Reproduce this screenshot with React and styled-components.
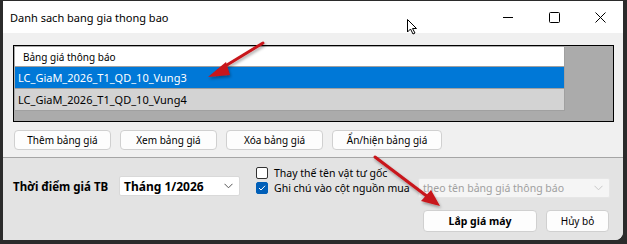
import React from "react";
import styled, { createGlobalStyle } from "styled-components";

const Global = createGlobalStyle`
  html, body { margin: 0; padding: 0; background: #2b2b2b; }
  body { width: 627px; height: 244px; overflow: hidden; font-family: "Noto Sans", "Open Sans", sans-serif; }
  #root { width: 627px; height: 244px; position: relative; }
`;

const Screen = styled.div`
  width: 627px;
  height: 244px;
  padding: 1px 4px 4px 3px;
  box-sizing: border-box;
  position: relative;
`;

const Window = styled.div`
  width: 620px;
  height: 239px;
  background: #f0f0f0;
  border-bottom-right-radius: 8px;
  display: flex;
  flex-direction: column;
  overflow: hidden;
`;

const TitleBar = styled.div`
  height: 32px;
  background: #ffffff;
  display: flex;
  align-items: center;
  padding-left: 7px;
  flex-shrink: 0;
`;

const Title = styled.div`
  font-size: 11px;
  color: #000;
  flex: 1;
`;

const Caption = styled.div`
  width: 46px;
  height: 32px;
  display: flex;
  align-items: center;
  justify-content: center;
`;

const Top = styled.div`
  padding: 12px 9px 0 10px;
  height: 124px;
  box-sizing: border-box;
  display: flex;
  flex-direction: column;
`;

const ListBox = styled.div`
  height: 77px;
  border: 1px solid #000;
  background: #ababab;
  box-sizing: border-box;
  padding: 1px 0 0 1px;
`;

const Row = styled.div`
  width: 550px;
  height: ${p => p.$h || 21}px;
  box-sizing: border-box;
  background: ${p => p.$bg};
  color: ${p => p.$color || "#000"};
  border-right: 1px solid #a0a0a0;
  border-bottom: 1px solid #a0a0a0;
  font-size: ${p => p.$fs || 11}px;
  display: flex;
  align-items: center;
  padding-left: ${p => p.$pl || 3}px;
  white-space: nowrap;
`;

const ButtonRow = styled.div`
  display: flex;
  gap: 9px;
  margin-top: 8px;
  padding-left: 1px;
`;

const Btn = styled.div`
  width: ${p => p.$w}px;
  height: ${p => p.$h || 20}px;
  box-sizing: border-box;
  background: #fdfdfd;
  border: 1px solid #d0d0d0;
  border-radius: 4px;
  font-size: ${p => p.$fs || 10}px;
  font-weight: ${p => (p.$bold ? 700 : 400)};
  color: #000;
  display: flex;
  align-items: center;
  justify-content: center;
  white-space: nowrap;
`;

const Bottom = styled.div`
  flex: 1;
  background: #e3e3e3;
  border-top: 1px solid #a5a5a5;
  padding: 12px 13px 0 10px;
  display: flex;
  flex-direction: column;
`;

const BottomLine = styled.div`
  display: flex;
  align-items: center;
  height: 32px;
`;

const Label = styled.div`
  font-size: 11.5px;
  font-weight: 700;
  width: 106px;
  white-space: nowrap;
`;

const Combo = styled.div`
  width: ${p => p.$w}px;
  height: ${p => p.$h || 20}px;
  box-sizing: border-box;
  background: ${p => (p.$disabled ? "#f5f5f5" : "#fff")};
  border: 1px solid ${p => (p.$disabled ? "#e6e6e6" : "#d9d9d9")};
  border-radius: 2px;
  display: flex;
  align-items: center;
  padding: 0 6px 0 4px;
  font-size: ${p => p.$fs}px;
  font-weight: ${p => (p.$bold ? 700 : 400)};
  color: ${p => (p.$disabled ? "#a0a0a0" : "#000")};
  white-space: nowrap;
  justify-content: space-between;
  margin-left: ${p => (p.$push ? "auto" : "0")};
  margin-top: ${p => p.$mt || 0}px;
`;

const Checks = styled.div`
  display: flex;
  flex-direction: column;
  margin-left: 16px;
  gap: 2px;
  align-self: flex-start;
  margin-top: -4px;
`;

const CheckLine = styled.div`
  display: flex;
  align-items: center;
  font-size: 10.5px;
  height: 13px;
  white-space: nowrap;
`;

const Box = styled.div`
  width: 12px;
  height: 12px;
  border-radius: 2px;
  box-sizing: border-box;
  border: 1px solid ${p => (p.$checked ? "#005fb8" : "#333")};
  background: ${p => (p.$checked ? "#005fb8" : "#fff")};
  margin-right: 6px;
  display: flex;
  align-items: center;
  justify-content: center;
`;

const Actions = styled.div`
  display: flex;
  justify-content: flex-end;
  gap: 9px;
  margin-top: 8px;
  margin-right: 1px;
`;

const Overlay = styled.svg`
  position: absolute;
  left: 0;
  top: 0;
  pointer-events: none;
`;

const Chevron = ({ color = "#555" }) => (
  <svg width="9" height="6" viewBox="0 0 9 6">
    <path d="M0.5 0.8 L4.5 4.8 L8.5 0.8" fill="none" stroke={color} strokeWidth="1" />
  </svg>
);

export default function App() {
  return (
    <Screen>
      <Global />
      <Window>
        <TitleBar>
          <Title>Danh sach bang gia thong bao</Title>
          <Caption>
            <svg width="10" height="10" viewBox="0 0 10 10"><path d="M0 5.5 H10" stroke="#000" strokeWidth="1" /></svg>
          </Caption>
          <Caption>
            <svg width="11" height="11" viewBox="0 0 11 11"><rect x="0.5" y="0.5" width="10" height="10" rx="1" fill="none" stroke="#000" strokeWidth="1" /></svg>
          </Caption>
          <Caption>
            <svg width="11" height="11" viewBox="0 0 11 11"><path d="M0.5 0.5 L10.5 10.5 M10.5 0.5 L0.5 10.5" stroke="#000" strokeWidth="1" /></svg>
          </Caption>
        </TitleBar>
        <Top>
          <ListBox>
            <Row $bg="#ffffff" $h={20} $pl={8} $fs={10}>Bảng giá thông báo</Row>
            <Row $bg="#0078d7" $color="#ffffff" $h={22}>LC_GiaM_2026_T1_QD_10_Vung3</Row>
            <Row $bg="#d3d3d3" $h={22}>LC_GiaM_2026_T1_QD_10_Vung4</Row>
          </ListBox>
          <ButtonRow>
            <Btn $w={97}>Thêm bảng giá</Btn>
            <Btn $w={97}>Xem bảng giá</Btn>
            <Btn $w={97}>Xóa bảng giá</Btn>
            <Btn $w={110}>Ẩn/hiện bảng giá</Btn>
          </ButtonRow>
        </Top>
        <Bottom>
          <BottomLine>
            <Label>Thời điểm giá TB</Label>
            <Combo $w={121} $bold $fs={12}>
              <span>Tháng 1/2026</span>
              <Chevron />
            </Combo>
            <Checks>
              <CheckLine><Box />Thay thế tên vật tư gốc</CheckLine>
              <CheckLine>
                <Box $checked>
                  <svg width="8" height="6" viewBox="0 0 8 6"><path d="M1 3 L3 5 L7 0.8" fill="none" stroke="#fff" strokeWidth="1" /></svg>
                </Box>
                Ghi chú vào cột nguồn mua
              </CheckLine>
            </Checks>
            <Combo $w={192} $disabled $push $mt={4} $fs={10.5}>
              <span>theo tên bảng giá thông báo</span>
              <Chevron color="#c8c8c8" />
            </Combo>
          </BottomLine>
          <Actions>
            <Btn $w={114} $h={22} $bold $fs={10.5}>Lắp giá máy</Btn>
            <Btn $w={63} $h={22}>Hủy bỏ</Btn>
          </Actions>
        </Bottom>
      </Window>
      <Overlay width="627" height="244" viewBox="0 0 627 244">
        <defs>
          <filter id="sh" x="-20%" y="-20%" width="140%" height="140%">
            <feDropShadow dx="1" dy="2" stdDeviation="1.5" floodColor="#000" floodOpacity="0.35" />
          </filter>
        </defs>
        <g filter="url(#sh)">
          <path d="M263 43 L222 68" stroke="#c8141a" strokeWidth="3" strokeLinecap="round" />
          <path d="M208 77 L226 62 L230 75 Z" fill="#c8141a" />
        </g>
        <g filter="url(#sh)">
          <path d="M375 157 L428 197" stroke="#c8141a" strokeWidth="3" strokeLinecap="round" />
          <path d="M440 206 L421 201 L431 190 Z" fill="#c8141a" />
        </g>
        <g transform="translate(407 19)">
          <path d="M0.5 0.5 L0.5 13 L3.5 10 L6 15 L8 14 L5.5 9.5 L9.5 9.5 Z" fill="#fff" stroke="#000" strokeWidth="1" strokeLinejoin="round" />
        </g>
      </Overlay>
    </Screen>
  );
}
